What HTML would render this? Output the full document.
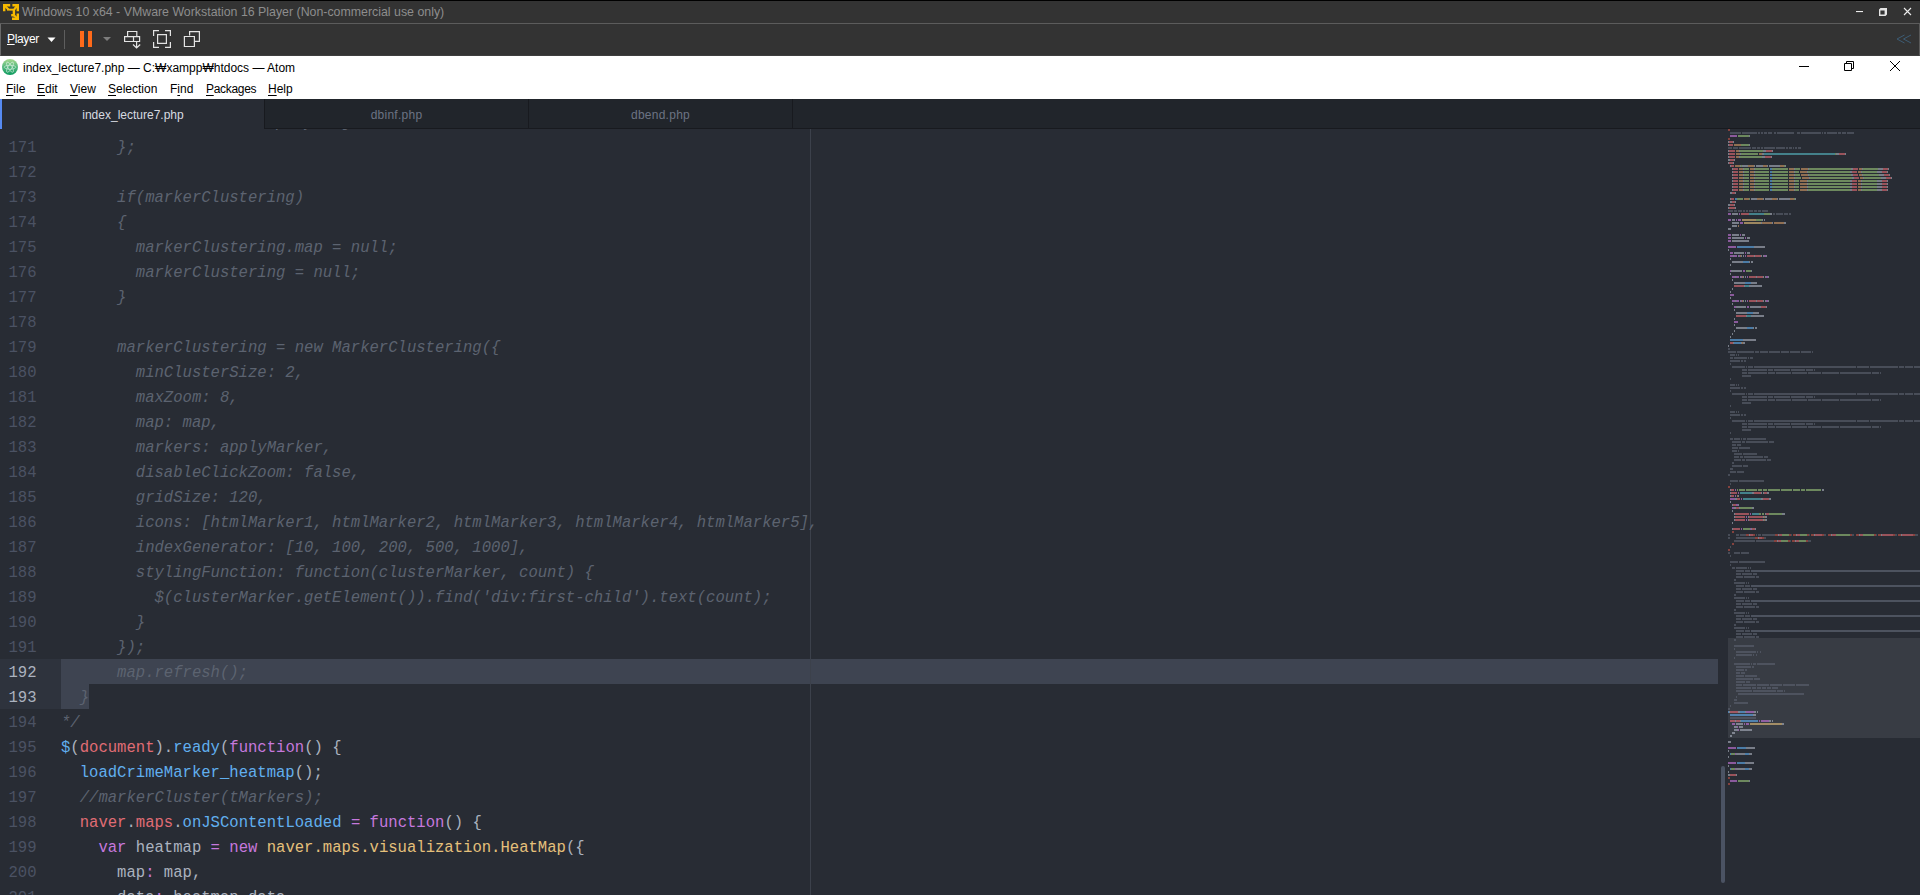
<!DOCTYPE html>
<html lang="en"><head><meta charset="utf-8"><title>index_lecture7.php — Atom</title>
<style>
*{box-sizing:border-box}
html,body{margin:0;padding:0}
body{width:1920px;height:895px;overflow:hidden;background:#282c34;position:relative;font-family:"Liberation Sans","Noto Sans CJK KR",sans-serif;font-size:12px}
.abs{position:absolute}
#vmtitle{position:absolute;left:0;top:0;width:1920px;height:24px;background:#333333;border-top:1px solid #000;border-bottom:1px solid #5c5c5c}
#vmtool{position:absolute;left:0;top:24px;width:1920px;height:32px;background:#333333;border-left:1px solid #696969;border-right:1px solid #5a5a5a;border-bottom:1px solid #3e3e3e}
#vmtitle .txt{position:absolute;left:22px;top:4px;color:#8d8d8d;font-size:12.36px;line-height:14px;white-space:pre}
#vmtool .player{position:absolute;left:6px;top:8px;color:#fff;font-size:12px;line-height:14px;white-space:pre;letter-spacing:-.35px}
#vmtool .player u{text-decoration:underline;text-underline-offset:1px}
#atitle{position:absolute;left:0;top:56px;width:1920px;height:43px;background:#fff}
#atitle .txt{position:absolute;left:23px;top:5px;color:#000;font-size:12px;line-height:14px;white-space:pre}
.menu{position:absolute;top:26px;color:#000;font-size:12px;line-height:14px;white-space:pre}
.menu u{text-decoration:underline;text-underline-offset:1.5px}
#tabs{position:absolute;left:0;top:99px;width:1920px;height:30px;background:#21252b;border-bottom:1px solid #181a1f}
.tab{position:absolute;top:0;height:30px;width:264px;border-left:1px solid #181a1f;border-bottom:1px solid #181a1f;color:#6c7383;text-align:center;line-height:32px;font-size:12px;white-space:pre;letter-spacing:.25px}
.tab.active{letter-spacing:0;left:0;background:#282c34;border-left:2px solid #568af2;border-bottom:none;color:#d7dae0}
#editor{position:absolute;left:0;top:129px;width:1920px;height:766px;overflow:hidden;background:#282c34;font-family:"Liberation Mono",monospace;font-size:15.58px}
#editor>*{position:absolute}
.ln{left:0;width:45px;padding-right:8.5px;padding-top:2px;text-align:right;color:#4b5263;line-height:25px;height:27px;white-space:pre}
.ln.sel{color:#abb2bf}
.cl{left:61px;padding-top:2px;line-height:25px;height:27px;white-space:pre;color:#abb2bf}
.tc{color:#5c6370;font-style:italic}
.td{color:#abb2bf}.tb{color:#61afef}.tr{color:#e06c75}.tp{color:#c678dd}.ty{color:#e5c07b}.tg{color:#98c379}.to{color:#d19a66}
.gsel{left:0;top:530px;width:61px;height:50px;background:#2e333d}
.selA{left:61px;top:530px;width:1657px;height:25px;background:#3e4451}
.selB{left:61px;top:555px;width:28px;height:25px;background:#3e4451}
.guide{left:810px;top:0;width:1px;height:766px;background:#3c414b}
.mmview{left:1728px;top:509px;width:192px;height:100px;background:rgba(171,178,191,.12)}
.mmscroll{left:1721px;top:637px;width:4px;height:117px;border-radius:2px;background:#4b5363}
#minimap{left:1728px;top:0;width:192px;height:766px}

</style></head>
<body>
<div id="vmtitle">
<svg class="abs" style="left:3px;top:3px" width="16" height="16" viewBox="0 0 16 16"><g fill="#f7ba00"><path d="M0 0h7.200v2.400H2.400V7.200H0zM9.400 0H16v7.200h-2.400V2.400H9.400zM16 9.400V16H9v-2.400h4.600V9.400z"/><rect x="4" y="4.700" width="8" height="1.900"/><rect x="9.700" y="5" width="2.400" height="7.200"/><rect x="8.200" y="10" width="3" height="2.400"/></g><g stroke="#f7ba00" stroke-width="2.200" fill="none"><path d="M2 2l3.500 3.500M14 2l-2.700 3.200M14 14l-3-2.500"/></g></svg>
<div class="txt">Windows 10 x64 - VMware Workstation 16 Player (Non-commercial use only)</div>
<svg class="abs" style="left:1850px;top:3px" width="70" height="18" viewBox="0 0 70 18"><rect x="6" y="7" width="7" height="1.100" fill="#ececec"/><path fill="#e4e4e4" fill-rule="evenodd" d="M29 5.500L30.500 4H37v6.500L35.500 12H29zM30.400 6.400v4.200h4.200V6.400z"/><path d="M54 4l7 7M61 4l-7 7" stroke="#ececec" stroke-width="1.100" fill="none"/></svg>
</div>
<div id="vmtool">
<div class="player"><u>P</u>layer</div>
<svg class="abs" style="left:0;top:0" width="220" height="31" viewBox="1 24 220 31">
<path d="M47.500 37.500h8l-4 4.500z" fill="#fff"/>
<path d="M64.500 30v19" stroke="#5e5e5e" stroke-width="1"/>
<path d="M80 31h4v16h-4zM88 31h4v16h-4z" fill="#ff6a1a"/>
<path d="M103 37h8l-4 4z" fill="#7d7d7d"/>
<g fill="none" stroke="#e4e4e4" stroke-width="1.200">
<path d="M127.600 36.500v-5h9.200v5M124.600 36.700h15v4.800h-15zM133.500 36.700v4.800M136.600 41.500v6M133 44.500l3.600 3.500l3.600-3.500"/>
<path d="M153.600 36v-5.400h5.400M165 30.600h5.400v5.400M170.400 42v5.400h-5.400M159 47.400h-5.400v-5.400M157.600 34.600h8.800v8.800h-8.800z"/>
<path d="M189.600 35.500v-3.900h9.800v9.800h-4.500M184.400 36.500h10v10h-10z"/>
</g>
</svg>
<svg class="abs" style="left:1894px;top:8px" width="18" height="14" viewBox="0 0 18 14" fill="none" stroke="#3d5c74" stroke-width="1"><path d="M9.500 3L2 7l7.500 4M16 3L8.500 7l7.500 4"/></svg>
</div>
<div id="atitle">
<svg class="abs" style="left:2px;top:3px" width="16" height="16" viewBox="0 0 16 16"><defs><linearGradient id="ag" x1="0" y1="0" x2="0" y2="1"><stop offset="0" stop-color="#a8da8e"/><stop offset=".45" stop-color="#5cbb80"/><stop offset="1" stop-color="#0b9a5e"/></linearGradient></defs><circle cx="8" cy="8" r="8" fill="url(#ag)"/><g fill="none" stroke="#f1faf4" stroke-opacity=".72" stroke-width=".7"><ellipse cx="8" cy="8.200" rx="5.800" ry="2"/><ellipse cx="8" cy="8.200" rx="5.800" ry="2" transform="rotate(58 8 8.200)"/><ellipse cx="8" cy="8.200" rx="5.800" ry="2" transform="rotate(122 8 8.200)"/></g></svg>
<div class="txt">index_lecture7.php — C:₩xampp₩htdocs — Atom</div>
<svg class="abs" style="left:1790px;top:0" width="130" height="24" viewBox="1790 56 130 24" fill="none" stroke="#000" stroke-width="1"><path d="M1799 66.500h10"/><path d="M1844.500 63.500h7v7h-7zM1846.500 63.500v-2h7v7h-2"/><path d="M1890 61l10 10M1900 61l-10 10"/></svg>
<div class="menu" style="left:6px"><u>F</u>ile</div>
<div class="menu" style="left:37px"><u>E</u>dit</div>
<div class="menu" style="left:70px"><u>V</u>iew</div>
<div class="menu" style="left:108px"><u>S</u>election</div>
<div class="menu" style="left:170px">F<u>i</u>nd</div>
<div class="menu" style="left:206px;letter-spacing:-.3px"><u>P</u>ackages</div>
<div class="menu" style="left:268px"><u>H</u>elp</div>
</div>
<div id="tabs">
<div class="tab active">index_lecture7.php</div>
<div class="tab" style="left:264px">dbinf.php</div>
<div class="tab" style="left:528px">dbend.php</div>
<div class="tab" style="left:792px;width:1px"></div>
</div>

<div id="editor">
<div class="gsel"></div>
<div class="selA"></div><div class="selB"></div>
<div class="guide"></div>
<div class="ln" style="top:-20px">170</div>
<div class="cl" style="top:-20px"><span class="tc">        hide mark at map by tag</span></div>
<div class="ln" style="top:5px">171</div>
<div class="cl" style="top:5px"><span class="tc">      };</span></div>
<div class="ln" style="top:30px">172</div>
<div class="ln" style="top:55px">173</div>
<div class="cl" style="top:55px"><span class="tc">      if(markerClustering)</span></div>
<div class="ln" style="top:80px">174</div>
<div class="cl" style="top:80px"><span class="tc">      {</span></div>
<div class="ln" style="top:105px">175</div>
<div class="cl" style="top:105px"><span class="tc">        markerClustering.map = null;</span></div>
<div class="ln" style="top:130px">176</div>
<div class="cl" style="top:130px"><span class="tc">        markerClustering = null;</span></div>
<div class="ln" style="top:155px">177</div>
<div class="cl" style="top:155px"><span class="tc">      }</span></div>
<div class="ln" style="top:180px">178</div>
<div class="ln" style="top:205px">179</div>
<div class="cl" style="top:205px"><span class="tc">      markerClustering = new MarkerClustering({</span></div>
<div class="ln" style="top:230px">180</div>
<div class="cl" style="top:230px"><span class="tc">        minClusterSize: 2,</span></div>
<div class="ln" style="top:255px">181</div>
<div class="cl" style="top:255px"><span class="tc">        maxZoom: 8,</span></div>
<div class="ln" style="top:280px">182</div>
<div class="cl" style="top:280px"><span class="tc">        map: map,</span></div>
<div class="ln" style="top:305px">183</div>
<div class="cl" style="top:305px"><span class="tc">        markers: applyMarker,</span></div>
<div class="ln" style="top:330px">184</div>
<div class="cl" style="top:330px"><span class="tc">        disableClickZoom: false,</span></div>
<div class="ln" style="top:355px">185</div>
<div class="cl" style="top:355px"><span class="tc">        gridSize: 120,</span></div>
<div class="ln" style="top:380px">186</div>
<div class="cl" style="top:380px"><span class="tc">        icons: [htmlMarker1, htmlMarker2, htmlMarker3, htmlMarker4, htmlMarker5],</span></div>
<div class="ln" style="top:405px">187</div>
<div class="cl" style="top:405px"><span class="tc">        indexGenerator: [10, 100, 200, 500, 1000],</span></div>
<div class="ln" style="top:430px">188</div>
<div class="cl" style="top:430px"><span class="tc">        stylingFunction: function(clusterMarker, count) {</span></div>
<div class="ln" style="top:455px">189</div>
<div class="cl" style="top:455px"><span class="tc">          $(clusterMarker.getElement()).find('div:first-child').text(count);</span></div>
<div class="ln" style="top:480px">190</div>
<div class="cl" style="top:480px"><span class="tc">        }</span></div>
<div class="ln" style="top:505px">191</div>
<div class="cl" style="top:505px"><span class="tc">      });</span></div>
<div class="ln sel" style="top:530px">192</div>
<div class="cl" style="top:530px"><span class="tc">      map.refresh();</span></div>
<div class="ln sel" style="top:555px">193</div>
<div class="cl" style="top:555px"><span class="tc">  }</span></div>
<div class="ln" style="top:580px">194</div>
<div class="cl" style="top:580px"><span class="tc">*/</span></div>
<div class="ln" style="top:605px">195</div>
<div class="cl" style="top:605px"><span class="tb">$</span><span class="td">(</span><span class="tr">document</span><span class="td">).</span><span class="tb">ready</span><span class="td">(</span><span class="tp">function</span><span class="td">() {</span></div>
<div class="ln" style="top:630px">196</div>
<div class="cl" style="top:630px"><span class="td">  </span><span class="tb">loadCrimeMarker_heatmap</span><span class="td">();</span></div>
<div class="ln" style="top:655px">197</div>
<div class="cl" style="top:655px"><span class="tc">  //markerCluster(tMarkers);</span></div>
<div class="ln" style="top:680px">198</div>
<div class="cl" style="top:680px"><span class="td">  </span><span class="tr">naver</span><span class="td">.</span><span class="tr">maps</span><span class="td">.</span><span class="tb">onJSContentLoaded</span><span class="td"> </span><span class="tp">=</span><span class="td"> </span><span class="tp">function</span><span class="td">() {</span></div>
<div class="ln" style="top:705px">199</div>
<div class="cl" style="top:705px"><span class="td">    </span><span class="tp">var</span><span class="td"> heatmap </span><span class="tp">=</span><span class="td"> </span><span class="tp">new</span><span class="td"> </span><span class="ty">naver.maps.visualization.HeatMap</span><span class="td">({</span></div>
<div class="ln" style="top:730px">200</div>
<div class="cl" style="top:730px"><span class="td">      map</span><span class="tp">:</span><span class="td"> map,</span></div>
<div class="ln" style="top:755px">201</div>
<div class="cl" style="top:755px"><span class="td">      data</span><span class="tp">:</span><span class="td"> heatmap_data</span></div>
<div class="mmview"></div>
<svg id="minimap" width="192" height="766" viewBox="0 0 192 766" shape-rendering="crispEdges">
<path fill="#be5046" fill-opacity="0.62" d="M0 0h2v2h-2zM0 9h2v2h-2zM0 357h2v2h-2zM4 402h2v2h-2zM18 405h3v2h-3zM25 405h2v2h-2zM47 405h3v2h-3zM61 405h2v2h-2zM65 405h3v2h-3zM79 405h2v2h-2zM83 405h3v2h-3zM94 405h2v2h-2zM100 405h3v2h-3zM122 405h2v2h-2zM128 405h3v2h-3zM146 405h2v2h-2zM150 405h3v2h-3zM165 405h2v2h-2zM170 405h3v2h-3zM185 405h2v2h-2zM27 408h3v2h-3zM34 408h2v2h-2zM46 411h3v2h-3zM60 411h2v2h-2zM64 411h3v2h-3zM78 411h2v2h-2zM4 414h2v2h-2zM0 420h2v2h-2zM0 648h2v2h-2zM0 654h2v2h-2z"/>
<path fill="#5c6370" fill-opacity="0.62" d="M2 3h11v2h-11zM14 3h15v2h-15zM30 3h2v2h-2zM33 3h2v2h-2zM36 3h3v2h-3zM40 3h4v2h-4zM46 3h2v2h-2zM49 3h17v2h-17zM69 3h3v2h-3zM73 3h20v2h-20zM94 3h1v2h-1zM96 3h2v2h-2zM99 3h10v2h-10zM110 3h3v2h-3zM114 3h4v2h-4zM119 3h7v2h-7zM0 18h4v2h-4zM5 18h5v2h-5zM11 18h12v2h-12zM24 18h4v2h-4zM29 18h3v2h-3zM33 18h2v2h-2zM36 18h11v2h-11zM48 18h9v2h-9zM58 18h2v2h-2zM61 18h3v2h-3zM65 18h1v2h-1zM67 18h2v2h-2zM70 18h3v2h-3zM0 81h5v2h-5zM6 81h3v2h-3zM10 81h4v2h-4zM15 81h2v2h-2zM18 81h2v2h-2zM21 81h4v2h-4zM26 81h3v2h-3zM30 81h3v2h-3zM34 81h6v2h-6zM45 84h2v2h-2zM48 84h7v2h-7zM56 84h4v2h-4zM61 84h2v2h-2zM0 219h2v2h-2zM0 222h8v2h-8zM9 222h17v2h-17zM27 222h4v2h-4zM32 222h8v2h-8zM41 222h11v2h-11zM53 222h8v2h-8zM62 222h10v2h-10zM73 222h10v2h-10zM84 222h1v2h-1zM2 225h5v2h-5zM8 225h1v2h-1zM10 225h1v2h-1zM2 228h3v2h-3zM6 228h13v2h-13zM20 228h1v2h-1zM22 228h3v2h-3zM2 231h10v2h-10zM13 231h2v2h-2zM16 231h2v2h-2zM2 234h1v2h-1zM4 237h13v2h-13zM18 237h1v2h-1zM20 237h5v2h-5zM26 237h102v2h-102zM129 237h12v2h-12zM142 237h28v2h-28zM171 237h5v2h-5zM177 237h8v2h-8zM186 237h6v2h-6zM14 240h5v2h-5zM20 240h19v2h-19zM40 240h5v2h-5zM46 240h16v2h-16zM63 240h14v2h-14zM78 240h7v2h-7zM86 240h1v2h-1zM14 243h5v2h-5zM20 243h19v2h-19zM40 243h7v2h-7zM48 243h15v2h-15zM64 243h15v2h-15zM80 243h13v2h-13zM94 243h17v2h-17zM112 243h31v2h-31zM144 243h7v2h-7zM152 243h1v2h-1zM14 246h9v2h-9zM2 249h1v2h-1zM2 255h5v2h-5zM8 255h1v2h-1zM10 255h1v2h-1zM2 258h10v2h-10zM13 258h2v2h-2zM16 258h2v2h-2zM2 261h1v2h-1zM4 264h13v2h-13zM18 264h1v2h-1zM20 264h5v2h-5zM26 264h102v2h-102zM129 264h12v2h-12zM142 264h28v2h-28zM171 264h5v2h-5zM177 264h8v2h-8zM186 264h6v2h-6zM14 267h5v2h-5zM20 267h19v2h-19zM40 267h5v2h-5zM46 267h16v2h-16zM63 267h14v2h-14zM78 267h7v2h-7zM86 267h1v2h-1zM14 270h5v2h-5zM20 270h19v2h-19zM40 270h7v2h-7zM48 270h15v2h-15zM64 270h15v2h-15zM80 270h13v2h-13zM94 270h17v2h-17zM112 270h31v2h-31zM144 270h7v2h-7zM152 270h1v2h-1zM14 273h9v2h-9zM2 276h1v2h-1zM2 282h5v2h-5zM8 282h1v2h-1zM10 282h1v2h-1zM2 285h10v2h-10zM13 285h2v2h-2zM16 285h2v2h-2zM2 288h1v2h-1zM4 291h13v2h-13zM18 291h1v2h-1zM20 291h5v2h-5zM26 291h102v2h-102zM129 291h12v2h-12zM142 291h28v2h-28zM171 291h5v2h-5zM177 291h8v2h-8zM186 291h6v2h-6zM14 294h5v2h-5zM20 294h19v2h-19zM40 294h5v2h-5zM46 294h16v2h-16zM63 294h14v2h-14zM78 294h7v2h-7zM86 294h1v2h-1zM14 297h5v2h-5zM20 297h19v2h-19zM40 297h7v2h-7zM48 297h15v2h-15zM64 297h15v2h-15zM80 297h13v2h-13zM94 297h17v2h-17zM112 297h31v2h-31zM144 297h7v2h-7zM152 297h1v2h-1zM14 300h9v2h-9zM2 303h1v2h-1zM2 309h3v2h-3zM6 309h6v2h-6zM13 309h1v2h-1zM15 309h3v2h-3zM19 309h19v2h-19zM4 312h9v2h-9zM14 312h3v2h-3zM18 312h22v2h-22zM41 312h5v2h-5zM4 315h4v2h-4zM9 315h4v2h-4zM4 318h6v2h-6zM11 318h11v2h-11zM4 321h5v2h-5zM10 321h1v2h-1zM6 324h8v2h-8zM15 324h14v2h-14zM6 327h5v2h-5zM12 327h3v2h-3zM16 327h19v2h-19zM36 327h4v2h-4zM6 330h7v2h-7zM14 330h3v2h-3zM18 330h20v2h-20zM39 330h4v2h-4zM4 333h2v2h-2zM4 336h10v2h-10zM15 336h5v2h-5zM2 339h3v2h-3zM2 342h6v2h-6zM9 342h7v2h-7zM0 345h2v2h-2zM2 351h8v2h-8zM11 351h25v2h-25zM2 354h1v2h-1zM0 405h2v2h-2zM8 405h3v2h-3zM12 405h6v2h-6zM28 405h1v2h-1zM30 405h3v2h-3zM34 405h13v2h-13zM63 405h1v2h-1zM81 405h1v2h-1zM96 405h2v2h-2zM124 405h2v2h-2zM148 405h1v2h-1zM167 405h2v2h-2zM187 405h3v2h-3zM0 408h2v2h-2zM8 408h19v2h-19zM36 408h2v2h-2zM6 411h21v2h-21zM28 411h18v2h-18zM62 411h1v2h-1zM80 411h3v2h-3zM2 417h1v2h-1zM0 423h2v2h-2zM6 423h6v2h-6zM13 423h8v2h-8zM2 426h1v2h-1zM2 432h8v2h-8zM11 432h26v2h-26zM2 435h1v2h-1zM4 438h3v2h-3zM8 438h11v2h-11zM20 438h1v2h-1zM22 438h1v2h-1zM8 441h8v2h-8zM17 441h5v2h-5zM8 444h5v2h-5zM14 444h10v2h-10zM25 444h4v2h-4zM8 447h7v2h-7zM16 447h11v2h-11zM28 447h3v2h-3zM6 450h2v2h-2zM6 453h11v2h-11zM18 453h1v2h-1zM20 453h1v2h-1zM8 456h8v2h-8zM17 456h5v2h-5zM8 459h5v2h-5zM14 459h10v2h-10zM25 459h4v2h-4zM8 462h7v2h-7zM16 462h11v2h-11zM28 462h3v2h-3zM6 465h2v2h-2zM6 468h11v2h-11zM18 468h1v2h-1zM20 468h1v2h-1zM8 471h8v2h-8zM17 471h5v2h-5zM8 474h5v2h-5zM14 474h10v2h-10zM25 474h4v2h-4zM8 477h7v2h-7zM16 477h11v2h-11zM28 477h3v2h-3zM6 480h2v2h-2zM6 483h11v2h-11zM18 483h1v2h-1zM20 483h1v2h-1zM8 486h8v2h-8zM17 486h5v2h-5zM8 489h5v2h-5zM14 489h10v2h-10zM25 489h4v2h-4zM8 492h7v2h-7zM16 492h11v2h-11zM28 492h3v2h-3zM6 495h2v2h-2zM6 498h11v2h-11zM18 498h1v2h-1zM20 498h1v2h-1zM8 501h8v2h-8zM17 501h5v2h-5zM8 504h5v2h-5zM14 504h10v2h-10zM25 504h4v2h-4zM8 507h7v2h-7zM16 507h11v2h-11zM28 507h3v2h-3zM6 510h2v2h-2zM6 516h20v2h-20zM6 519h1v2h-1zM8 522h20v2h-20zM29 522h1v2h-1zM32 522h1v2h-1zM8 525h16v2h-16zM25 525h1v2h-1zM28 525h1v2h-1zM6 528h1v2h-1zM6 534h16v2h-16zM23 534h1v2h-1zM25 534h3v2h-3zM29 534h18v2h-18zM8 537h15v2h-15zM24 537h2v2h-2zM8 540h8v2h-8zM17 540h2v2h-2zM8 543h4v2h-4zM13 543h4v2h-4zM8 546h8v2h-8zM17 546h12v2h-12zM8 549h17v2h-17zM26 549h6v2h-6zM8 552h9v2h-9zM18 552h4v2h-4zM8 555h6v2h-6zM15 555h13v2h-13zM29 555h12v2h-12zM42 555h12v2h-12zM55 555h12v2h-12zM68 555h13v2h-13zM8 558h15v2h-15zM24 558h4v2h-4zM29 558h4v2h-4zM34 558h4v2h-4zM39 558h4v2h-4zM44 558h6v2h-6zM8 561h16v2h-16zM25 561h23v2h-23zM49 561h6v2h-6zM56 561h1v2h-1zM10 564h66v2h-66zM8 567h1v2h-1zM6 570h3v2h-3zM6 573h14v2h-14zM2 576h1v2h-1zM0 579h2v2h-2zM2 588h26v2h-26z"/>
<path fill="#c678dd" fill-opacity="0.62" d="M2 6h7v2h-7zM0 84h3v2h-3zM11 84h1v2h-1zM0 90h3v2h-3zM8 90h1v2h-1zM10 90h3v2h-3zM12 93h3v2h-3zM0 105h3v2h-3zM12 105h1v2h-1zM0 108h3v2h-3zM17 108h1v2h-1zM0 111h3v2h-3zM0 117h8v2h-8zM2 123h3v2h-3zM17 123h1v2h-1zM2 126h3v2h-3zM6 126h3v2h-3zM11 126h1v2h-1zM17 126h1v2h-1zM36 126h2v2h-2zM2 141h1v2h-1zM15 141h2v2h-2zM4 147h3v2h-3zM8 147h3v2h-3zM13 147h1v2h-1zM19 147h1v2h-1zM38 147h2v2h-2zM2 165h4v2h-4zM4 171h3v2h-3zM8 171h3v2h-3zM13 171h1v2h-1zM19 171h1v2h-1zM38 171h2v2h-2zM6 177h2v2h-2zM19 177h2v2h-2zM6 192h4v2h-4zM7 360h1v2h-1zM10 363h1v2h-1zM7 366h1v2h-1zM2 369h5v2h-5zM13 369h1v2h-1zM8 375h2v2h-2zM4 378h2v2h-2zM22 384h1v2h-1zM18 387h1v2h-1zM18 390h1v2h-1zM13 399h1v2h-1zM22 399h1v2h-1zM0 618h8v2h-8zM7 624h1v2h-1zM0 633h8v2h-8zM7 639h1v2h-1zM2 651h7v2h-7zM18 582h8v2h-8zM31 591h1v2h-1zM33 591h8v2h-8zM4 594h3v2h-3zM16 594h1v2h-1zM18 594h3v2h-3zM9 597h1v2h-1zM10 600h1v2h-1z"/>
<path fill="#98c379" fill-opacity="0.62" d="M10 6h11v2h-11zM13 15h8v2h-8zM12 21h23v2h-23zM13 24h17v2h-17zM107 24h1v2h-1zM12 27h22v2h-22zM13 36h1v2h-1zM56 36h1v2h-1zM16 39h5v2h-5zM27 39h14v2h-14zM44 39h16v2h-16zM67 39h5v2h-5zM81 39h42v2h-42zM135 39h15v2h-15zM16 42h5v2h-5zM27 42h14v2h-14zM44 42h16v2h-16zM67 42h4v2h-4zM80 42h42v2h-42zM134 42h15v2h-15zM16 45h5v2h-5zM27 45h14v2h-14zM44 45h16v2h-16zM67 45h5v2h-5zM81 45h42v2h-42zM135 45h16v2h-16zM16 48h5v2h-5zM27 48h14v2h-14zM44 48h16v2h-16zM67 48h6v2h-6zM82 48h42v2h-42zM136 48h17v2h-17zM16 51h5v2h-5zM27 51h14v2h-14zM44 51h16v2h-16zM67 51h4v2h-4zM80 51h42v2h-42zM134 51h15v2h-15zM16 54h5v2h-5zM27 54h14v2h-14zM44 54h16v2h-16zM67 54h4v2h-4zM80 54h42v2h-42zM134 54h15v2h-15zM16 57h5v2h-5zM27 57h14v2h-14zM44 57h16v2h-16zM67 57h4v2h-4zM80 57h42v2h-42zM134 57h15v2h-15zM16 60h5v2h-5zM27 60h14v2h-14zM44 60h16v2h-16zM67 60h4v2h-4zM80 60h42v2h-42zM134 60h15v2h-15zM9 69h6v2h-6zM21 69h1v2h-1zM66 69h1v2h-1zM36 84h6v2h-6zM28 90h6v2h-6zM18 141h5v2h-5zM9 360h1v2h-1zM11 360h6v2h-6zM18 360h11v2h-11zM30 360h4v2h-4zM35 360h4v2h-4zM40 360h12v2h-12zM53 360h11v2h-11zM65 360h7v2h-7zM73 360h4v2h-4zM78 360h15v2h-15zM12 378h12v2h-12zM31 384h2v2h-2zM34 384h2v2h-2zM41 384h13v2h-13zM15 399h7v2h-7zM54 405h7v2h-7zM72 405h7v2h-7zM108 405h14v2h-14zM135 405h11v2h-11zM53 411h7v2h-7zM71 411h7v2h-7zM3 624h4v2h-4zM3 639h4v2h-4zM10 651h11v2h-11z"/>
<path fill="#abb2bf" fill-opacity="0.62" d="M21 6h1v2h-1zM0 12h1v2h-1zM5 12h1v2h-1zM0 15h1v2h-1zM21 15h1v2h-1zM0 21h1v2h-1zM11 21h1v2h-1zM35 21h3v2h-3zM44 21h1v2h-1zM0 24h1v2h-1zM12 24h1v2h-1zM34 24h2v2h-2zM108 24h3v2h-3zM117 24h1v2h-1zM0 27h1v2h-1zM11 27h1v2h-1zM34 27h3v2h-3zM43 27h1v2h-1zM0 30h2v2h-2zM6 30h1v2h-1zM0 33h1v2h-1zM5 33h1v2h-1zM2 36h1v2h-1zM12 36h1v2h-1zM14 36h6v2h-6zM26 36h1v2h-1zM28 36h7v2h-7zM39 36h1v2h-1zM41 36h11v2h-11zM57 36h1v2h-1zM4 39h1v2h-1zM15 39h1v2h-1zM26 39h1v2h-1zM66 39h1v2h-1zM80 39h1v2h-1zM123 39h2v2h-2zM134 39h1v2h-1zM150 39h5v2h-5zM160 39h1v2h-1zM4 42h1v2h-1zM15 42h1v2h-1zM26 42h1v2h-1zM66 42h1v2h-1zM79 42h1v2h-1zM122 42h2v2h-2zM133 42h1v2h-1zM149 42h5v2h-5zM159 42h1v2h-1zM4 45h1v2h-1zM15 45h1v2h-1zM26 45h1v2h-1zM66 45h1v2h-1zM80 45h1v2h-1zM123 45h2v2h-2zM134 45h1v2h-1zM151 45h5v2h-5zM161 45h1v2h-1zM4 48h1v2h-1zM15 48h1v2h-1zM26 48h1v2h-1zM66 48h1v2h-1zM81 48h1v2h-1zM124 48h2v2h-2zM135 48h1v2h-1zM153 48h5v2h-5zM163 48h1v2h-1zM4 51h1v2h-1zM15 51h1v2h-1zM26 51h1v2h-1zM66 51h1v2h-1zM79 51h1v2h-1zM122 51h2v2h-2zM133 51h1v2h-1zM149 51h5v2h-5zM159 51h1v2h-1zM4 54h1v2h-1zM15 54h1v2h-1zM26 54h1v2h-1zM66 54h1v2h-1zM79 54h1v2h-1zM122 54h2v2h-2zM133 54h1v2h-1zM149 54h5v2h-5zM159 54h1v2h-1zM4 57h1v2h-1zM15 57h1v2h-1zM26 57h1v2h-1zM66 57h1v2h-1zM79 57h1v2h-1zM122 57h2v2h-2zM133 57h1v2h-1zM149 57h5v2h-5zM159 57h1v2h-1zM4 60h1v2h-1zM15 60h1v2h-1zM26 60h1v2h-1zM66 60h1v2h-1zM79 60h1v2h-1zM122 60h2v2h-2zM133 60h1v2h-1zM149 60h5v2h-5zM159 60h1v2h-1zM2 63h2v2h-2zM7 63h1v2h-1zM2 69h1v2h-1zM23 69h6v2h-6zM35 69h1v2h-1zM37 69h7v2h-7zM49 69h1v2h-1zM51 69h11v2h-11zM67 69h1v2h-1zM2 72h2v2h-2zM7 72h1v2h-1zM0 75h2v2h-2zM6 75h1v2h-1zM0 78h1v2h-1zM7 78h1v2h-1zM4 84h6v2h-6zM42 84h2v2h-2zM4 90h3v2h-3zM34 90h1v2h-1zM36 90h1v2h-1zM4 93h7v2h-7zM33 93h1v2h-1zM44 93h1v2h-1zM56 93h2v2h-2zM4 96h5v2h-5zM0 99h3v2h-3zM4 105h7v2h-7zM14 105h3v2h-3zM4 108h12v2h-12zM19 108h3v2h-3zM4 111h17v2h-17zM26 117h11v2h-11zM0 120h1v2h-1zM6 123h10v2h-10zM19 123h3v2h-3zM5 126h1v2h-1zM10 126h1v2h-1zM13 126h1v2h-1zM15 126h1v2h-1zM26 126h1v2h-1zM33 126h1v2h-1zM35 126h1v2h-1zM38 126h1v2h-1zM2 129h1v2h-1zM4 132h11v2h-11zM21 132h1v2h-1zM23 132h2v2h-2zM2 135h1v2h-1zM3 141h11v2h-11zM23 141h1v2h-1zM2 144h1v2h-1zM7 147h1v2h-1zM12 147h1v2h-1zM15 147h1v2h-1zM17 147h1v2h-1zM28 147h1v2h-1zM35 147h1v2h-1zM37 147h1v2h-1zM40 147h1v2h-1zM4 150h1v2h-1zM6 153h11v2h-11zM23 153h6v2h-6zM16 156h1v2h-1zM21 156h13v2h-13zM4 159h1v2h-1zM2 162h1v2h-1zM2 168h1v2h-1zM7 171h1v2h-1zM12 171h1v2h-1zM15 171h1v2h-1zM17 171h1v2h-1zM28 171h1v2h-1zM35 171h1v2h-1zM37 171h1v2h-1zM40 171h1v2h-1zM4 174h1v2h-1zM8 177h10v2h-10zM22 177h11v2h-11zM38 177h1v2h-1zM6 180h1v2h-1zM8 183h11v2h-11zM25 183h6v2h-6zM18 186h1v2h-1zM23 186h13v2h-13zM6 189h1v2h-1zM6 195h1v2h-1zM8 198h11v2h-11zM25 198h1v2h-1zM27 198h2v2h-2zM6 201h1v2h-1zM4 204h1v2h-1zM2 207h1v2h-1zM15 210h13v2h-13zM5 213h1v2h-1zM13 213h1v2h-1zM15 213h2v2h-2zM0 216h1v2h-1zM2 360h1v2h-1zM94 360h2v2h-2zM2 363h1v2h-1zM24 363h2v2h-2zM33 363h1v2h-1zM35 363h1v2h-1zM39 363h2v2h-2zM2 366h1v2h-1zM10 366h1v2h-1zM7 369h2v2h-2zM33 369h2v2h-2zM41 369h2v2h-2zM2 372h1v2h-1zM4 375h1v2h-1zM10 375h1v2h-1zM6 378h2v2h-2zM11 378h1v2h-1zM24 378h2v2h-2zM4 381h1v2h-1zM6 384h1v2h-1zM37 384h1v2h-1zM54 384h3v2h-3zM6 387h1v2h-1zM20 387h1v2h-1zM35 387h1v2h-1zM37 387h2v2h-2zM6 390h1v2h-1zM20 390h1v2h-1zM35 390h1v2h-1zM37 390h2v2h-2zM4 393h1v2h-1zM4 399h1v2h-1zM23 399h1v2h-1zM27 399h1v2h-1zM21 405h1v2h-1zM50 405h1v2h-1zM68 405h1v2h-1zM86 405h1v2h-1zM103 405h1v2h-1zM131 405h1v2h-1zM153 405h1v2h-1zM173 405h1v2h-1zM30 408h1v2h-1zM49 411h1v2h-1zM67 411h1v2h-1zM4 603h3v2h-3zM2 606h2v2h-2zM0 612h3v2h-3zM18 618h9v2h-9zM0 621h1v2h-1zM8 624h9v2h-9zM21 624h3v2h-3zM0 627h1v2h-1zM17 633h9v2h-9zM0 636h1v2h-1zM8 639h9v2h-9zM21 639h3v2h-3zM0 642h1v2h-1zM0 645h2v2h-2zM8 645h1v2h-1zM21 651h1v2h-1zM1 582h1v2h-1zM10 582h2v2h-2zM17 582h1v2h-1zM26 582h2v2h-2zM29 582h1v2h-1zM25 585h3v2h-3zM7 591h1v2h-1zM12 591h1v2h-1zM41 591h2v2h-2zM44 591h1v2h-1zM8 594h7v2h-7zM54 594h2v2h-2zM6 597h3v2h-3zM11 597h4v2h-4zM6 600h4v2h-4zM12 600h12v2h-12z"/>
<path fill="#e06c75" fill-opacity="0.62" d="M1 12h4v2h-4zM1 15h4v2h-4zM1 21h6v2h-6zM38 21h6v2h-6zM1 24h6v2h-6zM111 24h6v2h-6zM1 27h6v2h-6zM37 27h6v2h-6zM2 30h4v2h-4zM1 33h4v2h-4zM3 36h3v2h-3zM5 39h5v2h-5zM125 39h5v2h-5zM155 39h5v2h-5zM5 42h5v2h-5zM124 42h5v2h-5zM154 42h5v2h-5zM5 45h5v2h-5zM125 45h5v2h-5zM156 45h5v2h-5zM5 48h5v2h-5zM126 48h5v2h-5zM158 48h5v2h-5zM5 51h5v2h-5zM124 51h5v2h-5zM154 51h5v2h-5zM5 54h5v2h-5zM124 54h5v2h-5zM154 54h5v2h-5zM5 57h5v2h-5zM124 57h5v2h-5zM154 57h5v2h-5zM5 60h5v2h-5zM124 60h5v2h-5zM154 60h5v2h-5zM4 63h3v2h-3zM3 69h3v2h-3zM4 72h3v2h-3zM2 75h4v2h-4zM1 78h6v2h-6zM13 84h8v2h-8zM19 126h7v2h-7zM27 126h6v2h-6zM21 147h7v2h-7zM29 147h6v2h-6zM6 156h10v2h-10zM21 171h7v2h-7zM29 171h6v2h-6zM33 177h5v2h-5zM8 186h10v2h-10zM2 213h3v2h-3zM3 360h3v2h-3zM3 363h6v2h-6zM26 363h7v2h-7zM36 363h3v2h-3zM3 366h3v2h-3zM9 369h3v2h-3zM35 369h6v2h-6zM5 375h3v2h-3zM8 378h3v2h-3zM7 384h14v2h-14zM38 384h3v2h-3zM7 387h10v2h-10zM21 387h14v2h-14zM7 390h10v2h-10zM21 390h14v2h-14zM5 399h7v2h-7zM24 399h3v2h-3zM22 405h3v2h-3zM51 405h3v2h-3zM69 405h3v2h-3zM87 405h7v2h-7zM104 405h4v2h-4zM132 405h3v2h-3zM154 405h11v2h-11zM174 405h11v2h-11zM31 408h3v2h-3zM50 411h3v2h-3zM68 411h3v2h-3zM2 645h6v2h-6zM2 582h8v2h-8zM2 591h5v2h-5zM8 591h4v2h-4z"/>
<path fill="#d19a66" fill-opacity="0.62" d="M6 15h7v2h-7zM8 21h3v2h-3zM8 24h4v2h-4zM31 24h3v2h-3zM8 27h3v2h-3zM7 36h5v2h-5zM20 36h6v2h-6zM35 36h4v2h-4zM52 36h4v2h-4zM11 39h4v2h-4zM22 39h4v2h-4zM61 39h5v2h-5zM73 39h7v2h-7zM131 39h3v2h-3zM11 42h4v2h-4zM22 42h4v2h-4zM61 42h5v2h-5zM72 42h7v2h-7zM130 42h3v2h-3zM11 45h4v2h-4zM22 45h4v2h-4zM61 45h5v2h-5zM73 45h7v2h-7zM131 45h3v2h-3zM11 48h4v2h-4zM22 48h4v2h-4zM61 48h5v2h-5zM74 48h7v2h-7zM132 48h3v2h-3zM11 51h4v2h-4zM22 51h4v2h-4zM61 51h5v2h-5zM72 51h7v2h-7zM130 51h3v2h-3zM11 54h4v2h-4zM22 54h4v2h-4zM61 54h5v2h-5zM72 54h7v2h-7zM130 54h3v2h-3zM11 57h4v2h-4zM22 57h4v2h-4zM61 57h5v2h-5zM72 57h7v2h-7zM130 57h3v2h-3zM11 60h4v2h-4zM22 60h4v2h-4zM61 60h5v2h-5zM72 60h7v2h-7zM130 60h3v2h-3zM16 69h5v2h-5zM29 69h6v2h-6zM44 69h5v2h-5zM62 69h4v2h-4zM34 93h10v2h-10zM46 93h10v2h-10zM10 96h1v2h-1zM12 126h1v2h-1zM14 147h1v2h-1zM14 171h1v2h-1zM14 213h1v2h-1zM9 366h1v2h-1zM36 387h1v2h-1zM36 390h1v2h-1z"/>
<path fill="#56b6c2" fill-opacity="0.62" d="M36 24h71v2h-71zM21 84h15v2h-15zM17 156h4v2h-4zM19 186h4v2h-4zM12 363h12v2h-12zM15 369h18v2h-18zM24 384h7v2h-7z"/>
<path fill="#61afef" fill-opacity="0.62" d="M42 39h2v2h-2zM42 42h2v2h-2zM42 45h2v2h-2zM42 48h2v2h-2zM42 51h2v2h-2zM42 54h2v2h-2zM42 57h2v2h-2zM42 60h2v2h-2zM7 69h2v2h-2zM9 117h17v2h-17zM15 132h6v2h-6zM17 153h6v2h-6zM19 183h6v2h-6zM19 198h6v2h-6zM2 210h13v2h-13zM6 213h7v2h-7zM9 618h9v2h-9zM2 624h1v2h-1zM17 624h4v2h-4zM9 633h8v2h-8zM2 639h1v2h-1zM17 639h4v2h-4zM0 582h1v2h-1zM12 582h5v2h-5zM2 585h23v2h-23zM13 591h17v2h-17z"/>
<path fill="#e5c07b" fill-opacity="0.62" d="M14 90h14v2h-14zM16 93h17v2h-17zM22 594h32v2h-32z"/>
<path fill="#5c6370" fill-opacity="0.72" d="M23 441h169v2h-169zM23 456h169v2h-169zM23 471h169v2h-169zM23 486h169v2h-169zM23 501h169v2h-169z"/>
</svg>
<div class="mmscroll"></div>
</div>
</body></html>
